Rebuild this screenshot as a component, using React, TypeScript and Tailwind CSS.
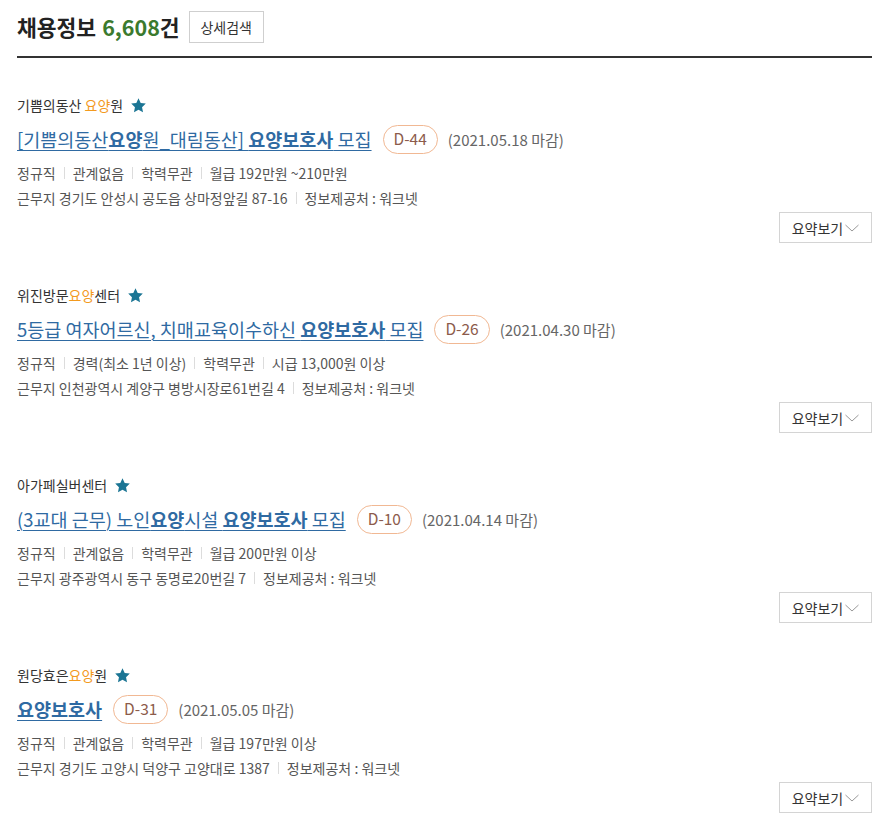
import React from 'react';

interface Job {
  company: React.ReactNode;
  title: React.ReactNode;
  dday: string;
  deadline: string;
  meta: string[];
  address: string;
}

const hl = (s: string) => <span className="text-[#f39a1e]">{s}</span>;
const b = (s: string) => <b className="font-bold">{s}</b>;

const jobs: Job[] = [
  {
    company: <>기쁨의동산 {hl('요양')}원</>,
    title: <>[기쁨의동산{b('요양')}원_대림동산] {b('요양보호사')} 모집</>,
    dday: 'D-44',
    deadline: '(2021.05.18 마감)',
    meta: ['정규직', '관계없음', '학력무관', '월급 192만원 ~210만원'],
    address: '근무지 경기도 안성시 공도읍 상마정앞길 87-16',
  },
  {
    company: <>위진방문{hl('요양')}센터</>,
    title: <>5등급 여자어르신, 치매교육이수하신 {b('요양보호사')} 모집</>,
    dday: 'D-26',
    deadline: '(2021.04.30 마감)',
    meta: ['정규직', '경력(최소 1년 이상)', '학력무관', '시급 13,000원 이상'],
    address: '근무지 인천광역시 계양구 병방시장로61번길 4',
  },
  {
    company: <>아가페실버센터</>,
    title: <>(3교대 근무) 노인{b('요양')}시설 {b('요양보호사')} 모집</>,
    dday: 'D-10',
    deadline: '(2021.04.14 마감)',
    meta: ['정규직', '관계없음', '학력무관', '월급 200만원 이상'],
    address: '근무지 광주광역시 동구 동명로20번길 7',
  },
  {
    company: <>원당효은{hl('요양')}원</>,
    title: <>{b('요양보호사')}</>,
    dday: 'D-31',
    deadline: '(2021.05.05 마감)',
    meta: ['정규직', '관계없음', '학력무관', '월급 197만원 이상'],
    address: '근무지 경기도 고양시 덕양구 고양대로 1387',
  },
];

function Sep() {
  return <span className="mx-[8px] inline-block h-[12px] w-px bg-[#dcdcdc]" />;
}

function Star() {
  return (
    <svg width="17" height="17" viewBox="0 0 24 24" className="ml-[7px]">
      <path
        d="M12 1.8l3.1 6.6 7.2.9-5.3 5 1.4 7.1L12 17.9l-6.4 3.5 1.4-7.1-5.3-5 7.2-.9z"
        fill="#1b7594"
      />
    </svg>
  );
}

function JobItem({ job }: { job: Job }) {
  return (
    <div className="pt-[37px] pb-[5px]">
      <div className="flex h-[20px] items-center text-[14px] text-[#333]">
        <span>{job.company}</span>
        <Star />
      </div>
      <div className="mt-[9px] flex h-[30px] items-center">
        <a className="text-[18.5px] text-[#2f6aa2] underline decoration-1 underline-offset-[3px]">{job.title}</a>
        <span className="ml-[11px] flex h-[29px] items-center rounded-full border border-[#f1b893] px-[10px] text-[15.5px] text-[#8c5b4b]">
          {job.dday}
        </span>
        <span className="ml-[10px] text-[15px] text-[#666]">{job.deadline}</span>
      </div>
      <div className="mt-[9px] flex h-[20px] items-center text-[14px] text-[#555]">
        {job.meta.map((m, i) => (
          <React.Fragment key={i}>
            {i > 0 && <Sep />}
            <span>{m}</span>
          </React.Fragment>
        ))}
      </div>
      <div className="mt-[5px] flex h-[20px] items-center text-[14px] text-[#555]">
        <span>{job.address}</span>
        <Sep />
        <span>정보제공처 : 워크넷</span>
      </div>
      <div className="mt-[4px] flex justify-end">
        <button className="flex h-[31px] w-[93px] items-center justify-center border border-[#d4d4d4] bg-white text-[14px] text-[#333]">
          요약보기
          <svg width="14" height="8" viewBox="0 0 14 8" className="ml-[2px]">
            <path d="M0.5 1l6.5 6 6.5-6" fill="none" stroke="#999" strokeWidth="1" />
          </svg>
        </button>
      </div>
    </div>
  );
}

export default function App() {
  return (
    <div className="min-h-[840px] bg-white px-[17px] pr-[24px] font-['Noto_Sans_CJK_KR','Noto_Sans',sans-serif] leading-none">
      <div className="flex h-[58px] items-start border-b-2 border-[#333] pt-[11px]">
        <h1 className="flex h-[32px] items-center text-[21.5px] font-bold text-[#222]">
          채용정보 <span className="ml-[6px] text-[#3b7a2e]">6,608</span>건
        </h1>
        <button className="ml-[9px] h-[32px] w-[75px] border border-[#cfcfcf] bg-white text-[14px] text-[#333]">
          상세검색
        </button>
      </div>
      {jobs.map((j, i) => (
        <JobItem key={i} job={j} />
      ))}
    </div>
  );
}
